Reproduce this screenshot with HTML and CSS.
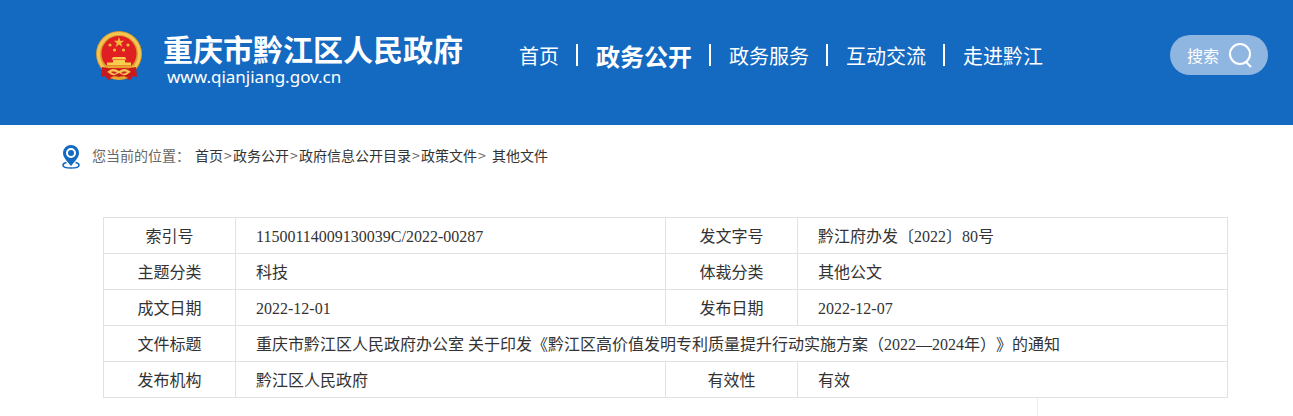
FILE: index.html
```html
<!DOCTYPE html>
<html lang="zh-CN">

<head>
  <meta charset="UTF-8">
  <meta name="viewport" content="width=device-width, initial-scale=1.0">
  <title>重庆市黔江区人民政府</title>
  <link rel="stylesheet" href="styles.css">
</head>

<body>
  <header class="header">
    <a class="logo" href="#">
      <svg class="emblem" viewBox="0 0 46 50" aria-hidden="true">
        <circle cx="23" cy="23" r="23" fill="#d99c2c" />
        <circle cx="23" cy="23" r="20.500" fill="none" stroke="#f3c653" stroke-width="3" />
        <circle cx="23" cy="22.500" r="17.500" fill="#e01f22" />
        <path d="M23 6l1.300 3.700h3.900l-3.100 2.400 1.200 3.800-3.300-2.300-3.300 2.300 1.200-3.800-3.100-2.400h3.900z" fill="#f0b93c" />
        <g fill="#f0b93c">
          <circle cx="14" cy="14" r="1.600" />
          <circle cx="32" cy="14" r="1.600" />
          <circle cx="18.500" cy="19" r="1.600" />
          <circle cx="27.500" cy="19" r="1.600" />
        </g>
        <path d="M17 26h12l1.500 2.500h-15zM17 29h12v2.500h6v3H11v-3h6z" fill="#f8cf4c" />
        <path d="M9 34.500h28v2.500H9z" fill="#e8a52c" />
        <path d="M6 36c4 1 8 1 11 2h12c3-1 7-1 11-2l1 10-4-1-3 4-6-2-5 1-5-1-6 2-3-4-4 1z" fill="#c9191c" />
        <path d="M14 39c3-2 6-1 9 1 3-2 6-3 9-1l3 2c-3 1-4 4-8 3l-4-2-4 2c-4 1-5-2-8-3z" fill="#f3c653" />
        <path d="M15 41c3-1 5 0 6 1-2 1-4 1-6-1zM31 41c-3-1-5 0-6 1 2 1 4 1 6-1z" fill="#d32222" />
        <path d="M14 47c3-2 6-2 9-1 3-1 6-1 9 1-3 1-6 2-9 2s-6-1-9-2z" fill="#e8a52c" />
      </svg>
      <span class="logo-text">
        <strong>重庆市黔江区人民政府</strong>
        <small>www.qianjiang.gov.cn</small>
      </span>
    </a>
    <nav class="nav">
      <a class="nav-item" href="#">首页</a>
      <a class="nav-item active" href="#">政务公开</a>
      <a class="nav-item" href="#">政务服务</a>
      <a class="nav-item" href="#">互动交流</a>
      <a class="nav-item" href="#">走进黔江</a>
    </nav>
    <button class="search" type="button">
      搜索
      <svg viewBox="0 0 24 26" aria-hidden="true">
        <circle cx="11" cy="12" r="10" />
        <path d="M17 20L22 25" />
      </svg>
    </button>
  </header>

  <main class="main">
    <nav class="crumbs" aria-label="当前位置">
      <svg class="pin" viewBox="0 0 18 24" aria-hidden="true">
        <path d="M4.500 17.500C2 18 1 19 1 20.200C1 22 4.500 23 9 23S17 22 17 20.200C17 19 16 18 13.500 17.500" fill="none" stroke="#1469c1" stroke-width="1.600" />
        <path d="M9 0a8 8 0 0 0-8 8c0 4.500 4 8 8 13C13 16 17 12.500 17 8a8 8 0 0 0-8-8z" fill="#1469c1" />
        <circle cx="9" cy="8" r="4" fill="none" stroke="#fff" stroke-width="2" />
      </svg>
      <span class="label">您当前的位置：</span>
      <a href="#">首页</a><i>&gt;</i><a href="#">政务公开</a><i>&gt;</i><a href="#">政府信息公开目录</a><i>&gt;</i><a href="#">政策文件</a><i>&gt;</i><a class="current" href="#">其他文件</a>
    </nav>

    <table class="info">
      <colgroup>
        <col class="col-name">
        <col>
        <col class="col-name">
        <col>
      </colgroup>
      <tr>
        <th scope="row">索引号</th>
        <td>11500114009130039C/2022-00287</td>
        <th scope="row">发文字号</th>
        <td>黔江府办发〔2022〕80号</td>
      </tr>
      <tr>
        <th scope="row">主题分类</th>
        <td>科技</td>
        <th scope="row">体裁分类</th>
        <td>其他公文</td>
      </tr>
      <tr>
        <th scope="row">成文日期</th>
        <td>2022-12-01</td>
        <th scope="row">发布日期</th>
        <td>2022-12-07</td>
      </tr>
      <tr>
        <th scope="row">文件标题</th>
        <td colspan="3">重庆市黔江区人民政府办公室 关于印发《黔江区高价值发明专利质量提升行动实施方案（2022—2024年）》的通知</td>
      </tr>
      <tr>
        <th scope="row">发布机构</th>
        <td>黔江区人民政府</td>
        <th scope="row">有效性</th>
        <td>有效</td>
      </tr>
    </table>

    <div class="content">
      <article></article>
      <aside class="side"></aside>
    </div>
  </main>
</body>

</html>
```
FILE: styles.css
```css
:root {
  --main-color: #1469c1;
  --txt-color: #333;
  --line-color: #e2e2e2;
}

* {
  margin: 0;
  padding: 0;
  box-sizing: border-box;
}

body {
  font-family: "Noto Sans CJK SC", sans-serif;
  font-size: 16px;
  color: var(--txt-color);
  background-color: #fff;
}

a {
  color: inherit;
  text-decoration: none;
}

/* header */
.header {
  display: flex;
  align-items: flex-start;
  padding: 28px 25px 39px 96px;
  background-color: var(--main-color);
  color: #fff;
}

.logo {
  display: flex;
  gap: 21px;
  white-space: nowrap;
}

.emblem {
  width: 46px;
  height: 50px;
  margin-top: 3px;
}

.logo-text strong {
  display: block;
  font-size: 30px;
  line-height: 40px;
}

.logo-text small {
  display: block;
  padding-left: 4px;
  font-family: "Noto Sans", sans-serif;
  font-size: 17px;
  line-height: 18px;
}

.nav {
  display: flex;
  align-items: center;
  height: 54px;
  margin-left: 56px;
  font-size: 20px;
  white-space: nowrap;
}

.nav-item {
  display: flex;
  align-items: center;
}

.nav-item + .nav-item::before {
  content: "";
  width: 2px;
  height: 22px;
  margin: 0 18px 0 17px;
  background-color: #fff;
}

.nav-item.active {
  font-size: 24px;
  font-weight: bold;
}

.search {
  display: flex;
  align-items: center;
  justify-content: center;
  gap: 10px;
  width: 98px;
  height: 40px;
  margin: 7px 0 0 auto;
  padding-left: 2px;
  border: 0;
  border-radius: 20px;
  background-color: #8fb6e1;
  color: #fff;
  font: inherit;
  cursor: pointer;
}

.search svg {
  width: 24px;
  height: 26px;
  fill: none;
  stroke: #fff;
  stroke-width: 2;
}

/* breadcrumb */
.main {
  padding: 20px 65px 0 62px;
}

.crumbs {
  display: flex;
  height: 24px;
  font-size: 14px;
  line-height: 20px;
}

.crumbs i {
  width: 10px;
  font-style: normal;
  text-align: center;
  color: #666;
}

.crumbs .label {
  margin: 0 5px 0 12px;
  color: #666;
}

.crumbs .current {
  margin-left: 5px;
}

.pin {
  width: 18px;
  height: 24px;
}

/* document info */
.info {
  width: calc(100% - 41px);
  margin: 48px 0 0 41px;
  border-collapse: collapse;
  table-layout: fixed;
}

.col-name {
  width: 132px;
}

.info th,
.info td {
  height: 36px;
  padding-top: 2px;
  border: 1px solid var(--line-color);
  font-family: "Liberation Serif", "Noto Sans CJK SC", serif;
  font-weight: normal;
  line-height: 24px;
  text-spacing-trim: space-all;
}

.info td {
  padding-left: 20px;
}

.content {
  display: flex;
  height: 18px;
  margin-left: 41px;
}

.content article {
  flex: 1;
}

.side {
  width: 191px;
  border-left: 1px solid #eee;
}
```
